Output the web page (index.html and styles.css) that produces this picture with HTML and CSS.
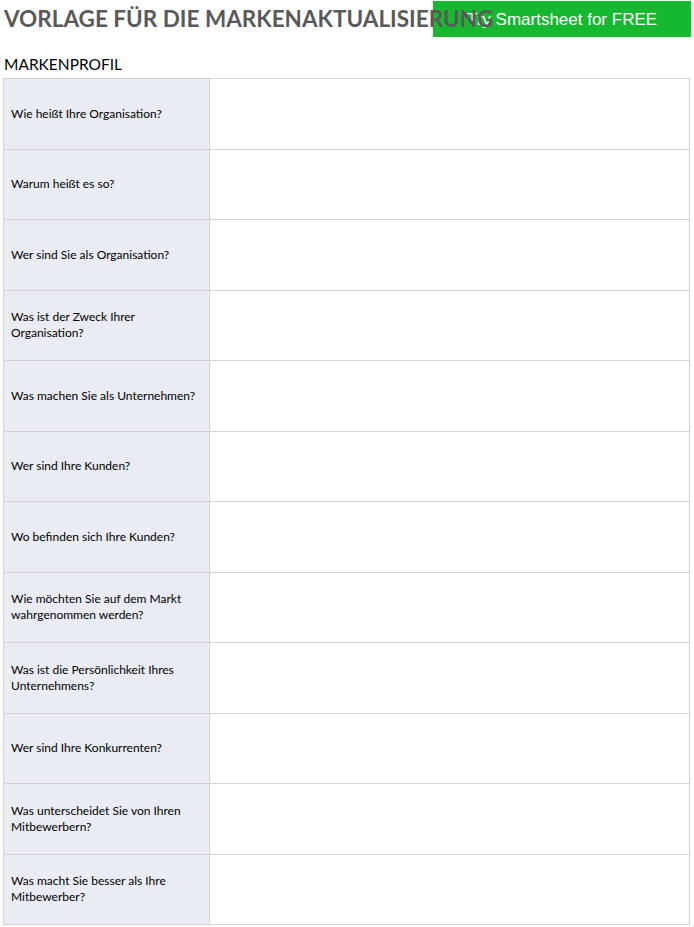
FILE: index.html
```html
<!DOCTYPE html>
<html lang="de">
<head>
<meta charset="utf-8">
<link rel="stylesheet" href="styles.css">
</head>
<body>
<div class="page">
  <header class="top">
    <h1 class="title">VORLAGE FÜR DIE MARKENAKTUALISIERUNG</h1>
    <a class="cta">Try Smartsheet for FREE</a>
  </header>
  <h2 class="section">MARKENPROFIL</h2>
  <table class="grid">
    <tr><th>Wie heißt Ihre Organisation?</th><td></td></tr>
    <tr><th>Warum heißt es so?</th><td></td></tr>
    <tr><th>Wer sind Sie als Organisation?</th><td></td></tr>
    <tr><th>Was ist der Zweck Ihrer<br>Organisation?</th><td></td></tr>
    <tr><th>Was machen Sie als Unternehmen?</th><td></td></tr>
    <tr><th>Wer sind Ihre Kunden?</th><td></td></tr>
    <tr><th>Wo befinden sich Ihre Kunden?</th><td></td></tr>
    <tr><th>Wie möchten Sie auf dem Markt<br>wahrgenommen werden?</th><td></td></tr>
    <tr><th>Was ist die Persönlichkeit Ihres<br>Unternehmens?</th><td></td></tr>
    <tr><th>Wer sind Ihre Konkurrenten?</th><td></td></tr>
    <tr><th>Was unterscheidet Sie von Ihren<br>Mitbewerbern?</th><td></td></tr>
    <tr><th>Was macht Sie besser als Ihre<br>Mitbewerber?</th><td></td></tr>
  </table>
</div>
</body>
</html>
```
FILE: styles.css
```css
html, body { margin: 0; padding: 0; background: #fff; }
body { font-family: Lato, "Open Sans", sans-serif; color: #000; }
.page { padding: 0 3px; }
.top { position: relative; height: 46px; }
.title {
  position: relative; z-index: 2;
  margin: 0; padding: 5px 0 0 1px;
  font-size: 22.5px; font-weight: 700; color: #595959;
  line-height: 28px; letter-spacing: 0;
}
.cta {
  position: absolute; z-index: 1;
  top: 1px; left: 430px; width: 258px; height: 36px;
  background: #16b82f; color: #fff;
  font-family: "Liberation Sans", Arial, sans-serif; font-size: 17px;
  display: flex; align-items: center; justify-content: center;
  padding-top: 1px; box-sizing: border-box;
  box-shadow: 0 0 1px rgba(0,0,0,0.25);
}
.section {
  margin: 0; padding: 8px 0 0 1px;
  font-size: 15.5px; font-weight: 400; line-height: 20px; height: 24px;
}
.grid {
  border-collapse: collapse; width: 687px; table-layout: fixed;
}
.grid tr { height: 70.5px; }
.grid th {
  width: 198px; background: #e9ecf3; text-align: left; font-weight: 400;
  font-size: 12px; line-height: 16px; padding: 0 0 0 7px;
  border: 1px solid #d3d3d3; vertical-align: middle;
}
.grid td { border: 1px solid #d3d3d3; }
```
